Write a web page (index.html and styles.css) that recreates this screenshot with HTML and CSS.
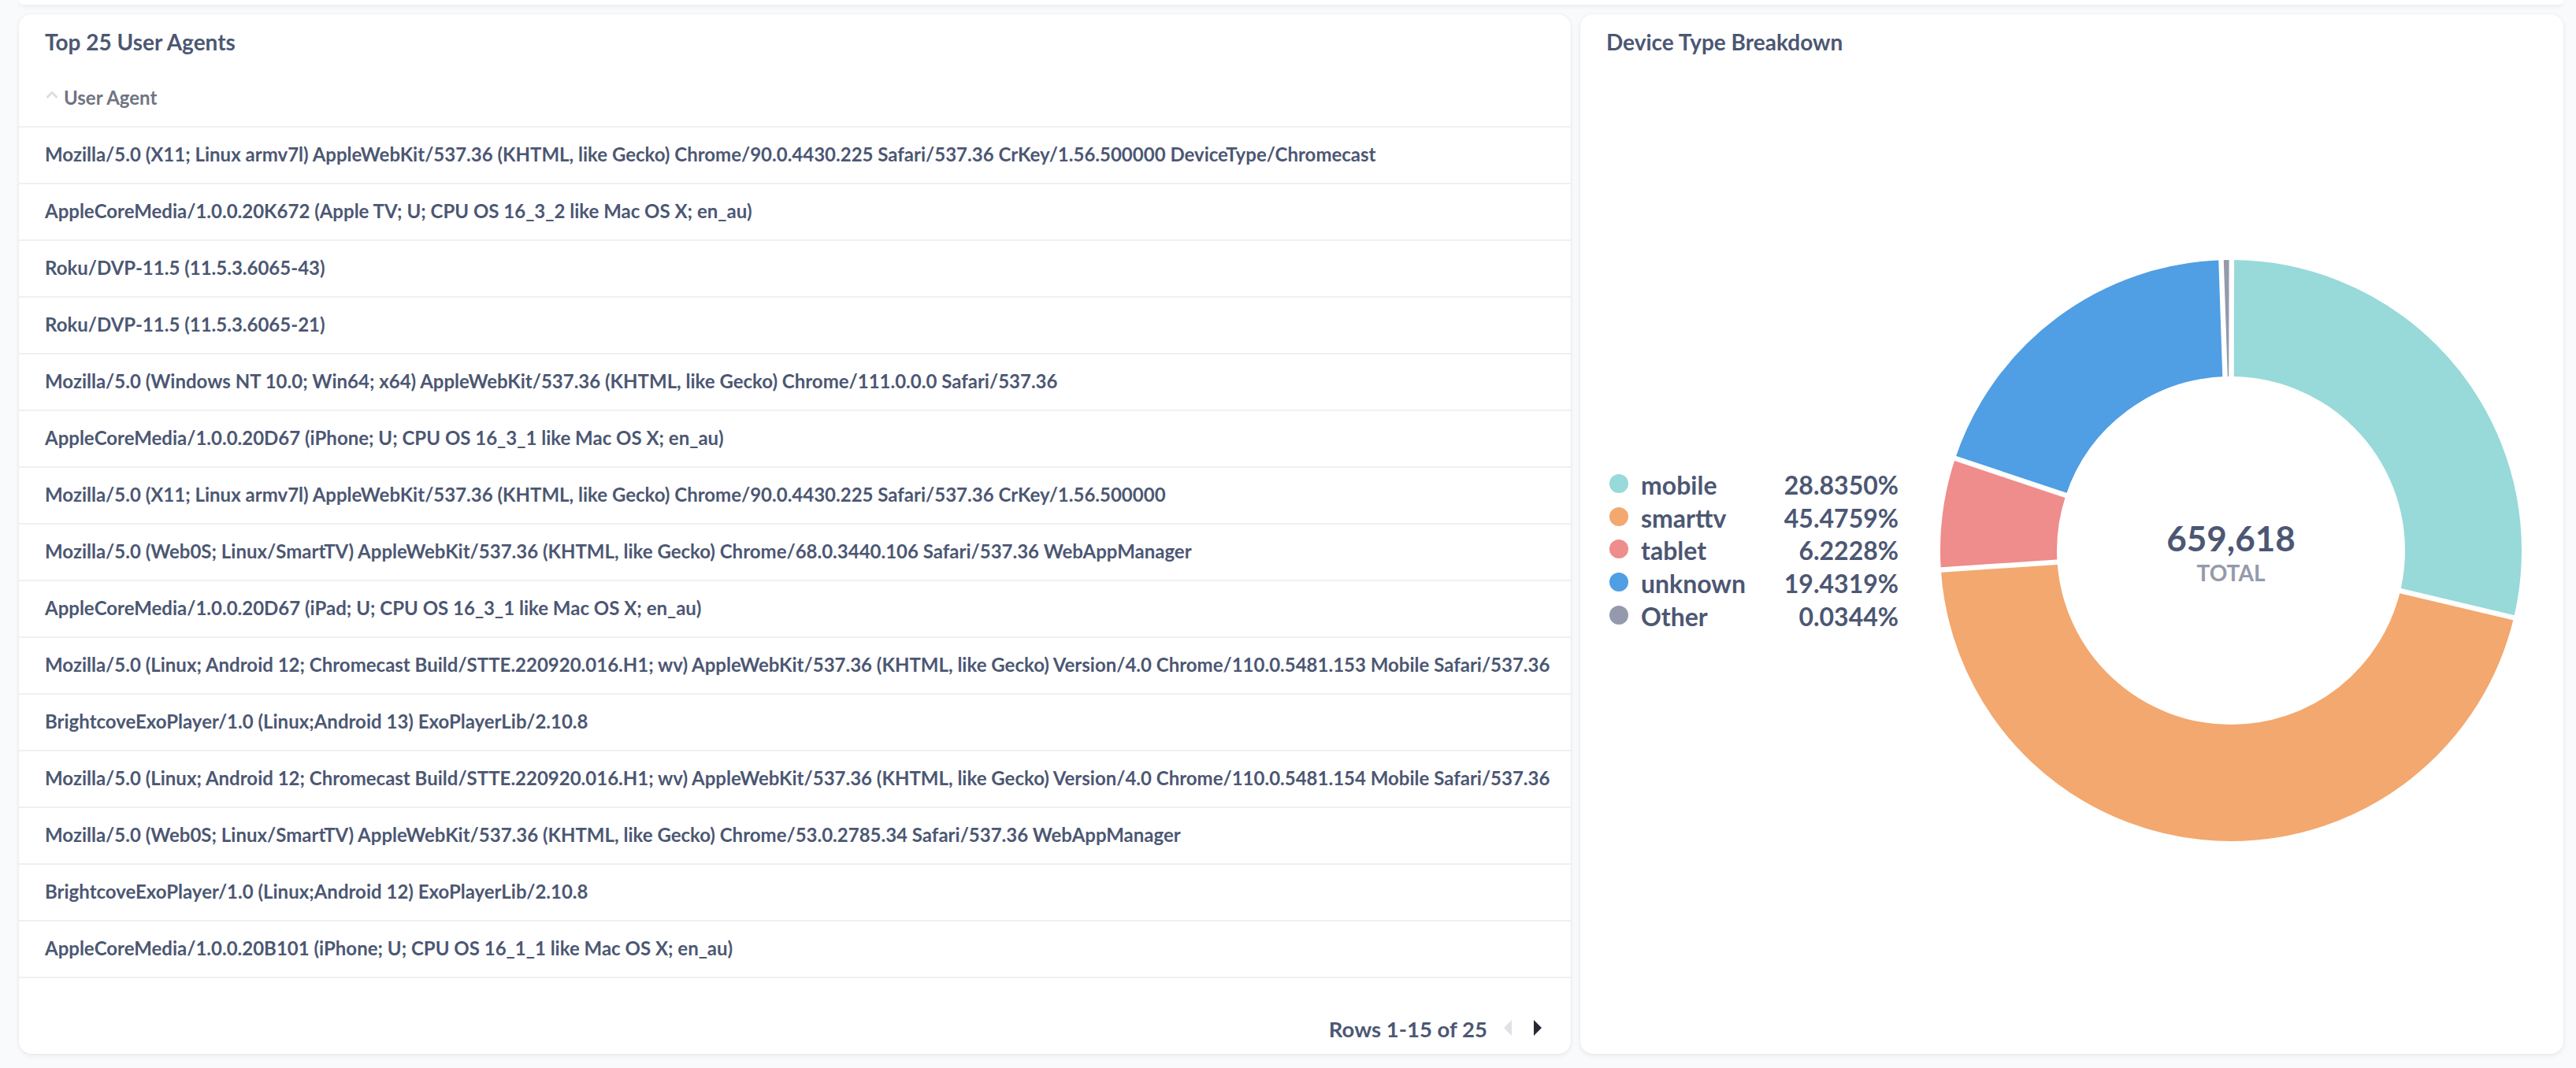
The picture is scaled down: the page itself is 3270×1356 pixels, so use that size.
FILE: index.html
```html
<!DOCTYPE html>
<html lang="en">
<head>
<meta charset="utf-8">
<title>Dashboard</title>
<link rel="stylesheet" href="styles.css">
</head>
<body>
<div class="top-card"></div>
<main class="grid">
  <section class="card table-card">
    <h2 class="card-title">Top 25 User Agents</h2>
    <div class="table">
      <div class="thead">
        <svg class="caret" width="16" height="10" viewBox="0 0 16 10"><polyline points="1.5,9 8,2.5 14.5,9" fill="none" stroke="#dcdee3" stroke-width="3"/></svg>
        <span>User Agent</span>
      </div>
      <div class="row">Mozilla/5.0 (X11; Linux armv7l) AppleWebKit/537.36 (KHTML, like Gecko) Chrome/90.0.4430.225 Safari/537.36 CrKey/1.56.500000 DeviceType/Chromecast</div>
      <div class="row">AppleCoreMedia/1.0.0.20K672 (Apple TV; U; CPU OS 16_3_2 like Mac OS X; en_au)</div>
      <div class="row">Roku/DVP-11.5 (11.5.3.6065-43)</div>
      <div class="row">Roku/DVP-11.5 (11.5.3.6065-21)</div>
      <div class="row">Mozilla/5.0 (Windows NT 10.0; Win64; x64) AppleWebKit/537.36 (KHTML, like Gecko) Chrome/111.0.0.0 Safari/537.36</div>
      <div class="row">AppleCoreMedia/1.0.0.20D67 (iPhone; U; CPU OS 16_3_1 like Mac OS X; en_au)</div>
      <div class="row">Mozilla/5.0 (X11; Linux armv7l) AppleWebKit/537.36 (KHTML, like Gecko) Chrome/90.0.4430.225 Safari/537.36 CrKey/1.56.500000</div>
      <div class="row">Mozilla/5.0 (Web0S; Linux/SmartTV) AppleWebKit/537.36 (KHTML, like Gecko) Chrome/68.0.3440.106 Safari/537.36 WebAppManager</div>
      <div class="row">AppleCoreMedia/1.0.0.20D67 (iPad; U; CPU OS 16_3_1 like Mac OS X; en_au)</div>
      <div class="row">Mozilla/5.0 (Linux; Android 12; Chromecast Build/STTE.220920.016.H1; wv) AppleWebKit/537.36 (KHTML, like Gecko) Version/4.0 Chrome/110.0.5481.153 Mobile Safari/537.36</div>
      <div class="row">BrightcoveExoPlayer/1.0 (Linux;Android 13) ExoPlayerLib/2.10.8</div>
      <div class="row">Mozilla/5.0 (Linux; Android 12; Chromecast Build/STTE.220920.016.H1; wv) AppleWebKit/537.36 (KHTML, like Gecko) Version/4.0 Chrome/110.0.5481.154 Mobile Safari/537.36</div>
      <div class="row">Mozilla/5.0 (Web0S; Linux/SmartTV) AppleWebKit/537.36 (KHTML, like Gecko) Chrome/53.0.2785.34 Safari/537.36 WebAppManager</div>
      <div class="row">BrightcoveExoPlayer/1.0 (Linux;Android 12) ExoPlayerLib/2.10.8</div>
      <div class="row">AppleCoreMedia/1.0.0.20B101 (iPhone; U; CPU OS 16_1_1 like Mac OS X; en_au)</div>
    </div>
    <div class="pager">
      <span class="pager-text">Rows 1-15 of 25</span>
      <svg class="pg-prev" width="10" height="20" viewBox="0 0 10 20"><polygon points="10,0 10,20 0,10" fill="#dfe1e5"/></svg>
      <svg class="pg-next" width="10" height="20" viewBox="0 0 10 20"><polygon points="0,0 0,20 10,10" fill="#262b33"/></svg>
    </div>
  </section>

  <section class="card chart-card">
    <h2 class="card-title">Device Type Breakdown</h2>
    <div class="chart-body">
      <ul class="legend">
        <li><span class="dot c-mobile"></span><span class="lbl">mobile</span><span class="pct">28.8350%</span></li>
        <li><span class="dot c-smarttv"></span><span class="lbl">smarttv</span><span class="pct">45.4759%</span></li>
        <li><span class="dot c-tablet"></span><span class="lbl">tablet</span><span class="pct">6.2228%</span></li>
        <li><span class="dot c-unknown"></span><span class="lbl">unknown</span><span class="pct">19.4319%</span></li>
        <li><span class="dot c-other"></span><span class="lbl">Other</span><span class="pct">0.0344%</span></li>
      </ul>
      <div class="donut">
        <svg class="donut-svg" width="738" height="738" viewBox="0 0 738 738">
          <g transform="translate(369 369) rotate(-90)" fill="none" stroke-width="148">
            <circle r="295" pathLength="360" stroke="#98d9d9" stroke-dasharray="103.24 400" stroke-dashoffset="-0.13"/>
            <circle r="295" pathLength="360" stroke="#f2a86f" stroke-dasharray="162.83 400" stroke-dashoffset="-103.37"/>
            <circle r="295" pathLength="360" stroke="#ef8c8c" stroke-dasharray="22.29 400" stroke-dashoffset="-266.2"/>
            <circle r="295" pathLength="360" stroke="#509ee3" stroke-dasharray="69.57 400" stroke-dashoffset="-288.49"/>
            <circle r="295" pathLength="360" stroke="#949aab" stroke-dasharray="2.07 400" stroke-dashoffset="-358.06"/>
          </g>
          <g transform="translate(369 369)" stroke="#ffffff" stroke-width="6.5">
            <line x1="0" y1="-214" x2="0" y2="-376" transform="rotate(0.13)"/>
            <line x1="0" y1="-214" x2="0" y2="-376" transform="rotate(103.37)"/>
            <line x1="0" y1="-214" x2="0" y2="-376" transform="rotate(266.2)"/>
            <line x1="0" y1="-214" x2="0" y2="-376" transform="rotate(288.49)"/>
            <line x1="0" y1="-214" x2="0" y2="-376" transform="rotate(358.06)"/>
          </g>
        </svg>
        <div class="donut-center">
          <div class="total-value">659,618</div>
          <div class="total-label">TOTAL</div>
        </div>
      </div>
    </div>
  </section>
</main>
</body>
</html>
```

FILE: styles.css
```css
* { box-sizing: border-box; }

html, body {
  margin: 0;
  padding: 0;
  background: #f9fafb;
  font-family: Lato, "Noto Sans", "Liberation Sans", sans-serif;
  color: #4c5773;
}

body {
  width: 3270px;
  height: 1356px;
  overflow: hidden;
}

.top-card {
  height: 6px;
  margin: 0 16px 0 24px;
  background: #ffffff;
  border-radius: 0 0 10px 10px;
  box-shadow: 0 2px 6px rgba(0, 0, 0, 0.07);
}

.grid {
  display: grid;
  grid-template-columns: 1970px 1248px;
  column-gap: 12px;
  padding: 12px 16px 0 24px;
}

.card {
  background: #ffffff;
  border-radius: 16px;
  box-shadow: 0 2px 6px rgba(0, 0, 0, 0.07), 0 0 0 1px rgba(0, 0, 0, 0.02);
  height: 1320px;
  display: flex;
  flex-direction: column;
  overflow: hidden;
}

.card-title {
  margin: 0;
  padding: 19px 33px 0;
  font-size: 28px;
  line-height: 1.2;
  font-weight: 700;
  color: #4c5773;
}

/* table */
.table {
  display: flex;
  flex-direction: column;
}

.thead {
  display: flex;
  align-items: center;
  padding: 39px 32px 22px 34px;
  border-bottom: 2px solid #f0f0f0;
  font-size: 24px;
  line-height: 1.2;
  font-weight: 700;
  color: #6f7483;
}

.caret {
  margin-right: 7px;
  margin-top: -8px;
}

.row {
  height: 72px;
  display: flex;
  align-items: center;
  padding: 0 32px 2px 33px;
  border-bottom: 2px solid #f0f0f0;
  font-size: 24px;
  line-height: 1.2;
  font-weight: 700;
  color: #4c5773;
  white-space: nowrap;
}

.pager {
  margin-top: auto;
  display: flex;
  justify-content: flex-end;
  align-items: center;
  padding: 0 37px 15px 0;
  font-size: 27.5px;
  line-height: 1.2;
  font-weight: 700;
  color: #4c5773;
}

.pg-prev {
  margin-left: 21px;
  margin-top: -4px;
}

.pg-next {
  margin-left: 28px;
  margin-top: -4px;
}

/* chart */
.chart-body {
  flex: 1;
  display: flex;
  align-items: center;
  justify-content: space-between;
  padding: 0 53px 10px 37px;
}

.legend {
  list-style: none;
  margin: 0;
  padding: 0;
  width: 367px;
  display: grid;
  grid-template-columns: 24px auto 1fr;
  column-gap: 16px;
  font-size: 32px;
  font-weight: 700;
  color: #4c5773;
}

.legend li {
  display: contents;
}

.legend .dot {
  width: 24px;
  height: 24px;
  border-radius: 50%;
  align-self: center;
  margin-top: -4px;
}

.legend .lbl,
.legend .pct {
  line-height: 41.7px;
}

.legend .pct {
  justify-self: end;
}

.c-mobile { background: #98d9d9; }
.c-smarttv { background: #f2a86f; }
.c-tablet { background: #ef8c8c; }
.c-unknown { background: #509ee3; }
.c-other { background: #949aab; }

.donut {
  display: grid;
  width: 738px;
  height: 738px;
}

.donut-svg {
  grid-area: 1 / 1;
  overflow: visible;
}

.donut-center {
  grid-area: 1 / 1;
  place-self: center;
  margin-top: 4px;
  text-align: center;
}

.total-value {
  font-size: 44px;
  line-height: 44px;
  font-weight: 700;
  color: #4c5773;
}

.total-label {
  margin-top: 8px;
  font-size: 28px;
  line-height: 28px;
  font-weight: 700;
  color: #949aab;
}
```
